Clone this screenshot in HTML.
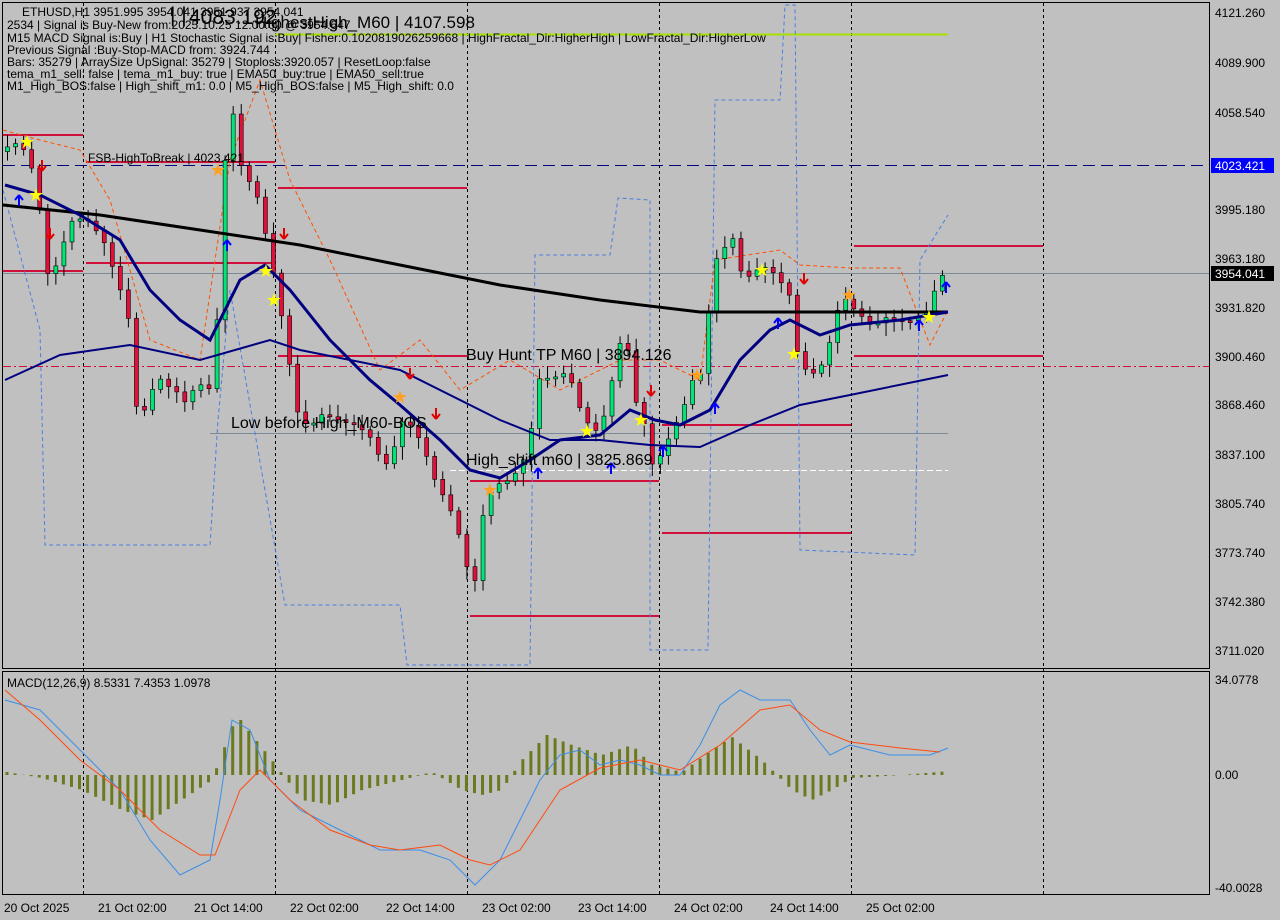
<!DOCTYPE html>
<html><head><meta charset="utf-8"><style>
html,body{margin:0;padding:0;background:#c0c0c0;}
svg{display:block;font-family:"Liberation Sans",sans-serif;}
</style></head><body>
<svg id="s" width="1280" height="920" xmlns="http://www.w3.org/2000/svg">
<rect width="1280" height="920" fill="#c0c0c0"/>
<g id="g"></g>
<rect x="2.5" y="2.5" width="1207" height="666" fill="none" stroke="#000"/>
<rect x="2.5" y="671.5" width="1207" height="223" fill="none" stroke="#000"/>
<g font-size="12" fill="#000">
<text x="1215" y="17">4121.260</text>
<text x="1215" y="67">4089.900</text>
<text x="1215" y="117">4058.540</text>
<text x="1215" y="214">3995.180</text>
<text x="1215" y="263">3963.180</text>
<text x="1215" y="312">3931.820</text>
<text x="1215" y="361">3900.460</text>
<text x="1215" y="409">3868.460</text>
<text x="1215" y="459">3837.100</text>
<text x="1215" y="508">3805.740</text>
<text x="1215" y="557">3773.740</text>
<text x="1215" y="606">3742.380</text>
<text x="1215" y="655">3711.020</text>
<text x="1215" y="684">34.0778</text>
<text x="1215" y="779">0.00</text>
<text x="1215" y="892">-40.0028</text>
</g>
<rect x="1211" y="158" width="63" height="15" fill="#0000ff"/>
<text x="1215" y="170" font-size="12" fill="#fff">4023.421</text>
<rect x="1211" y="266" width="63" height="15" fill="#000"/>
<text x="1215" y="278" font-size="12" fill="#fff">3954.041</text>
<g font-size="12" fill="#000">
<text x="4" y="912">20 Oct 2025</text>
<text x="98" y="912">21 Oct 02:00</text>
<text x="194" y="912">21 Oct 14:00</text>
<text x="290" y="912">22 Oct 02:00</text>
<text x="386" y="912">22 Oct 14:00</text>
<text x="482" y="912">23 Oct 02:00</text>
<text x="578" y="912">23 Oct 14:00</text>
<text x="674" y="912">24 Oct 02:00</text>
<text x="770" y="912">24 Oct 14:00</text>
<text x="866" y="912">25 Oct 02:00</text>
</g>
<g fill="#000">
<text x="189" y="24" font-size="21">4083.192</text>
<text x="170" y="22" font-size="21">| |</text>
<text x="255" y="28" font-size="17">HighestHigh_M60 | 4107.598</text>
<g font-size="12">
<text x="22" y="16">ETHUSD,H1  3951.995 3954.041 3951.937 3954.041</text>
<text x="7" y="29">2534 | Signal is Buy-New from:2025.10.25 12:00:00 @ 3954.647</text>
<text x="7" y="42">M15 MACD Signal is:Buy | H1 Stochastic Signal is:Buy| Fisher:0.1020819026259668 | HighFractal_Dir:HigherHigh | LowFractal_Dir:HigherLow</text>
<text x="7" y="54">Previous Signal :Buy-Stop-MACD from: 3924.744</text>
<text x="7" y="66">Bars: 35279 | ArraySize UpSignal: 35279 | Stoploss:3920.057 | ResetLoop:false</text>
<text x="7" y="78">tema_m1_sell: false | tema_m1_buy: true | EMA50_buy:true | EMA50_sell:true</text>
<text x="7" y="90">M1_High_BOS:false | High_shift_m1: 0.0 | M5_High_BOS:false | M5_High_shift: 0.0</text>
<text x="88" y="162">FSB-HighToBreak | 4023.421</text>
<text x="7" y="687">MACD(12,26,9) 8.5331 7.4353 1.0978</text>
</g>
<text x="466" y="360" font-size="16">Buy Hunt TP M60 | 3894.126</text>
<text x="231" y="428" font-size="16">Low before High_M60-BOS</text>
<text x="466" y="465" font-size="16">High_shift m60 | 3825.869</text>
</g>
</svg>
<script>
(function(){
var NS="http://www.w3.org/2000/svg",G=document.getElementById("g");
function el(t,a){var e=document.createElementNS(NS,t);for(var k in a)e.setAttribute(k,a[k]);G.appendChild(e);return e;}
function interp(pts,x){for(var i=0;i<pts.length-2;i+=2){if(x<=pts[i+2]){var t=(x-pts[i])/(pts[i+2]-pts[i]);return pts[i+1]+t*(pts[i+3]-pts[i+1]);}}return pts[pts.length-1];}
function poly(pts,c,w,d){var s="";for(var i=0;i<pts.length;i+=2)s+=pts[i]+","+pts[i+1]+" ";var a={points:s,fill:"none",stroke:c,"stroke-width":w};if(d)a["stroke-dasharray"]=d;el("polyline",a);}
[83,275,467,659,851,1043].forEach(function(x){el("line",{x1:x+.5,y1:3,x2:x+.5,y2:894,stroke:"#000","stroke-dasharray":"3,3"});});
el("line",{x1:3,y1:165.5,x2:1209,y2:165.5,stroke:"#000080","stroke-dasharray":"12,6"});
el("line",{x1:3,y1:273.5,x2:1209,y2:273.5,stroke:"#7a8a99"});
el("line",{x1:3,y1:366.5,x2:1209,y2:366.5,stroke:"#d0103a","stroke-dasharray":"8,3,2,3"});
el("line",{x1:210,y1:433.5,x2:948,y2:433.5,stroke:"#7a8a99"});
el("line",{x1:450,y1:470.5,x2:948,y2:470.5,stroke:"#fff","stroke-dasharray":"6,3"});
el("line",{x1:275,y1:34.5,x2:948,y2:34.5,stroke:"#a8e000","stroke-width":2});
[[135,0,83],[162,83,275],[188,275,467],[271,0,83],[263,83,275],[356,275,467],[481,467,659],[616,467,659],[425,659,851],[533,659,851],[246,851,1043],[356,851,1043]].forEach(function(r){el("line",{x1:r[1]+3,y1:r[0],x2:r[2],y2:r[0],stroke:"#d0103a","stroke-width":2});});
poly([3,190,40,330,45,545,210,545,218,420,230,290,285,605,400,605,407,665,530,665,535,255,610,255,618,198,650,200,650,650,708,650,715,100,780,100,785,5,795,5,800,550,915,555,920,260,948,215],"#4a7fe0",1,"4,3");
poly([3,130,40,140,80,150,110,200,150,340,200,360,230,160,260,80,290,180,330,260,380,370,420,340,460,390,510,360,560,390,620,360,660,360,700,380,715,260,780,250,800,265,850,268,900,268,930,345,948,310],"#ff5000",1,"4,3");
var cl=[5,150,20,145,30,160,40,195,45,270,55,270,65,240,75,215,90,220,105,240,115,270,125,300,130,320,140,430,150,400,160,380,170,390,185,400,200,380,210,390,218,330,225,180,232,90,240,160,250,180,260,200,270,250,280,300,290,360,300,420,310,430,320,410,335,415,345,420,360,425,375,440,385,470,395,450,405,420,415,430,425,450,435,480,445,500,455,510,465,550,475,590,485,510,495,485,510,480,520,470,530,450,540,380,555,380,570,375,580,410,590,420,600,430,610,400,620,340,630,350,637,400,645,420,655,470,665,450,675,430,685,410,695,380,705,375,715,260,725,245,735,235,745,280,755,270,770,265,780,280,790,290,800,360,810,375,820,375,830,350,840,310,850,300,860,310,875,325,885,315,900,320,915,320,930,310,940,280,948,273];
var prev=interp(cl,0);
for(var x=5;x<=948;x+=8.06){var c=interp(cl,x+4),o=prev;var wig=(Math.round(x*37)%13)-6;c+=wig*0.6;var up=c<o;var hi=Math.min(o,c)-4-(Math.round(x*7)%9),lo=Math.max(o,c)+4+(Math.round(x*11)%10);
el("line",{x1:x+2.5,y1:hi,x2:x+2.5,y2:lo,stroke:"#000"});
var h=Math.max(2,Math.abs(c-o));el("rect",{x:x+0.5,y:Math.min(o,c),width:4,height:h,fill:up?"#00e676":"#e0103a",stroke:"#000","stroke-width":0.6});prev=c;}
poly([5,380,60,355,130,345,200,360,270,340,300,350,400,370,500,420,550,440,600,440,650,445,700,447,750,425,800,405,850,395,948,375],"#000080",2);
poly([3,205,100,215,200,230,300,245,400,265,500,285,600,300,700,312,800,312,948,312],"#000",3);
poly([5,185,40,195,80,215,120,240,150,290,180,320,210,340,240,280,265,265,290,290,330,340,370,380,400,405,440,440,470,470,500,478,530,460,560,440,600,435,630,410,655,420,680,425,710,410,740,360,770,330,790,320,820,335,850,325,900,320,948,312],"#000080",3);
function arr(x,y,up){var col=up?"#0000ff":"#e00000";if(up){el("path",{d:"M"+x+","+(y-12)+" L"+(x-4)+","+(y-7)+" M"+x+","+(y-12)+" L"+(x+4)+","+(y-7)+" M"+x+","+(y-12)+" L"+x+","+(y-1),stroke:col,"stroke-width":2,fill:"none"});}else{el("path",{d:"M"+x+","+(y-1)+" L"+(x-4)+","+(y-6)+" M"+x+","+(y-1)+" L"+(x+4)+","+(y-6)+" M"+x+","+(y-1)+" L"+x+","+(y-12),stroke:col,"stroke-width":2,fill:"none"});}}
[[19,207],[227,252],[538,480],[611,475],[663,458],[715,415],[778,330],[919,332],[946,294]].forEach(function(a){arr(a[0],a[1],1);});
[[42,172],[50,240],[284,240],[410,380],[436,420],[651,397],[804,285]].forEach(function(a){arr(a[0],a[1],0);});
function star(x,y,col){el("text",{x:x,y:y,"font-size":"18",fill:col,"text-anchor":"middle"}).textContent="★";}
[[27,148],[36,201],[266,277],[274,306],[587,437],[641,426],[762,276],[794,360],[929,323]].forEach(function(a){star(a[0],a[1],"#ffff00");});
[[218,176],[400,403],[490,496],[697,381],[849,301]].forEach(function(a){star(a[0],a[1],"#ffa020");});
var hist=[5,772,40,778,80,790,120,810,150,820,180,800,210,780,235,715,250,735,270,760,300,800,330,805,360,790,400,780,430,772,460,790,480,795,500,790,520,760,545,735,570,745,600,755,630,745,650,765,680,772,710,750,730,737,760,760,790,790,810,800,830,790,850,778,900,775,948,771];
for(var xx=5;xx<=948;xx+=8.06){var yy=interp(hist,xx);el("line",{x1:xx+2,y1:775,x2:xx+2,y2:yy,stroke:"#6b7a1e","stroke-width":3});}
poly([5,700,40,710,80,750,120,790,150,840,180,875,210,860,220,800,232,720,250,730,270,780,300,810,340,830,380,850,420,850,450,860,475,885,500,860,520,820,540,780,560,755,580,750,600,765,620,760,640,765,660,775,680,775,700,745,720,705,740,690,760,700,790,700,810,730,830,755,850,745,870,750,890,755,910,755,930,755,948,748],"#3a8ee8",1);
poly([5,690,40,720,80,760,120,790,160,830,200,855,215,855,240,790,260,770,290,800,330,830,370,845,400,850,440,845,470,860,490,865,520,850,560,790,600,768,640,760,680,770,720,745,760,710,790,705,820,730,850,742,900,748,940,752],"#ff4a10",1);
})();
</script>
</body></html>
